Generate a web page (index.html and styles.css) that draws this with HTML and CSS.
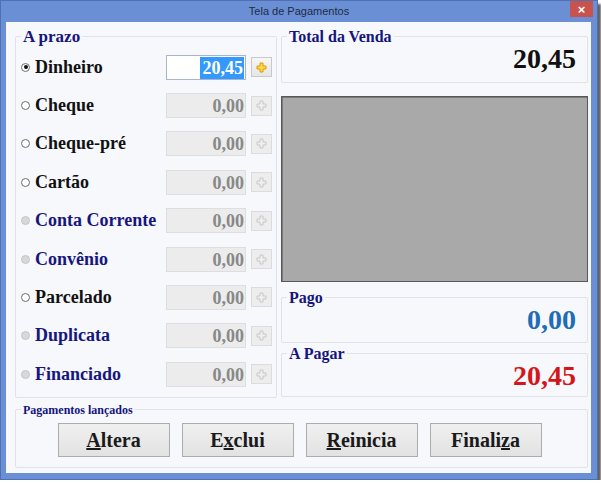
FILE: index.html
```html
<!DOCTYPE html>
<html lang="pt-BR">
<head>
  <meta charset="UTF-8" />
  <meta name="viewport" content="width=device-width, initial-scale=1" />
  <title>Tela de Pagamentos</title>
  <link rel="stylesheet" href="styles.css">
</head>
<body>

  <div class="window">
    <div class="titlebar">
      <span class="title">Tela de Pagamentos</span>
      <button class="close">&times;</button>
    </div>

    <div class="client">
      <div class="top">

        <!-- Forms of payment -->
        <div class="group prazo">
          <div class="legend">A prazo</div>
          <div class="rows">
            <div class="row">
              <span class="radio checked"></span>
              <span class="label">Dinheiro</span>
              <div class="amount active"><span class="sel">20,45</span></div>
              <button class="add active"><svg viewBox="0 0 11 11"><polygon points="4,1 7,1 7,4 10,4 10,7 7,7 7,10 4,10 4,7 1,7 1,4 4,4" /></svg></button>
            </div>
            <div class="row">
              <span class="radio"></span>
              <span class="label">Cheque</span>
              <div class="amount">0,00</div>
              <button class="add"><svg viewBox="0 0 11 11"><polygon points="4,1 7,1 7,4 10,4 10,7 7,7 7,10 4,10 4,7 1,7 1,4 4,4" /></svg></button>
            </div>
            <div class="row">
              <span class="radio"></span>
              <span class="label">Cheque-pré</span>
              <div class="amount">0,00</div>
              <button class="add"><svg viewBox="0 0 11 11"><polygon points="4,1 7,1 7,4 10,4 10,7 7,7 7,10 4,10 4,7 1,7 1,4 4,4" /></svg></button>
            </div>
            <div class="row">
              <span class="radio"></span>
              <span class="label">Cartão</span>
              <div class="amount">0,00</div>
              <button class="add"><svg viewBox="0 0 11 11"><polygon points="4,1 7,1 7,4 10,4 10,7 7,7 7,10 4,10 4,7 1,7 1,4 4,4" /></svg></button>
            </div>
            <div class="row off">
              <span class="radio"></span>
              <span class="label">Conta Corrente</span>
              <div class="amount">0,00</div>
              <button class="add"><svg viewBox="0 0 11 11"><polygon points="4,1 7,1 7,4 10,4 10,7 7,7 7,10 4,10 4,7 1,7 1,4 4,4" /></svg></button>
            </div>
            <div class="row off">
              <span class="radio"></span>
              <span class="label">Convênio</span>
              <div class="amount">0,00</div>
              <button class="add"><svg viewBox="0 0 11 11"><polygon points="4,1 7,1 7,4 10,4 10,7 7,7 7,10 4,10 4,7 1,7 1,4 4,4" /></svg></button>
            </div>
            <div class="row">
              <span class="radio"></span>
              <span class="label">Parcelado</span>
              <div class="amount">0,00</div>
              <button class="add"><svg viewBox="0 0 11 11"><polygon points="4,1 7,1 7,4 10,4 10,7 7,7 7,10 4,10 4,7 1,7 1,4 4,4" /></svg></button>
            </div>
            <div class="row off">
              <span class="radio"></span>
              <span class="label">Duplicata</span>
              <div class="amount">0,00</div>
              <button class="add"><svg viewBox="0 0 11 11"><polygon points="4,1 7,1 7,4 10,4 10,7 7,7 7,10 4,10 4,7 1,7 1,4 4,4" /></svg></button>
            </div>
            <div class="row off">
              <span class="radio"></span>
              <span class="label">Financiado</span>
              <div class="amount">0,00</div>
              <button class="add"><svg viewBox="0 0 11 11"><polygon points="4,1 7,1 7,4 10,4 10,7 7,7 7,10 4,10 4,7 1,7 1,4 4,4" /></svg></button>
            </div>
          </div>
        </div>

        <!-- Totals -->
        <div class="right">
          <div class="group total">
            <div class="legend small">Total da Venda</div>
            <div class="value">20,45</div>
          </div>
          <div class="panel"></div>
          <div class="group pago">
            <div class="legend small">Pago</div>
            <div class="value blue">0,00</div>
          </div>
          <div class="group apagar">
            <div class="legend small">A Pagar</div>
            <div class="value red">20,45</div>
          </div>
        </div>
      </div>

      <div class="group lancados">
        <div class="legend tiny">Pagamentos lançados</div>
        <div class="buttons">
          <button class="btn"><u>A</u>ltera</button>
          <button class="btn">E<u>x</u>clui</button>
          <button class="btn"><u>R</u>einicia</button>
          <button class="btn">Finali<u>z</u>a</button>
        </div>
      </div>
    </div>
  </div>

</body>
</html>
```

FILE: styles.css
```css
/* Reset & basics */
* {
  box-sizing: border-box;
}
body {
  margin: 0;
  background: #fff;
  font-family: 'Liberation Serif', 'Times New Roman', serif;
}

/* Window frame */
.window {
  width: 598px;
  height: 480px;
  background: #6b8fd4;
  border: 1px solid #4f70b4;
  box-shadow: 3px 4px 2px rgba(30, 30, 30, 0.7);
  display: flex;
  flex-direction: column;
}
.titlebar {
  height: 21px;
  display: grid;
  grid-template-columns: 1fr auto 1fr;
  align-items: start;
}
.title {
  grid-column: 2;
  font-family: 'Liberation Sans', Arial, sans-serif;
  font-size: 11px;
  line-height: 21px;
  color: #1d2b45;
}
.close {
  grid-column: 3;
  justify-self: end;
  width: 23px;
  height: 16px;
  margin-right: 4px;
  padding: 0;
  border: none;
  background: #c8524c;
  color: #fff;
  font-family: 'Liberation Sans', Arial, sans-serif;
  font-size: 13px;
  font-weight: bold;
  line-height: 15px;
}
.client {
  width: 585px;
  height: 451px;
  margin-left: 5px;
  background: #f7f8fc;
  padding: 14px 3px 0 9px;
}

/* Group boxes */
.group {
  border: 1px solid #dfe2ea;
  border-radius: 2px;
}
.legend {
  width: max-content;
  margin: -9px 0 0 5px;
  padding: 0 2px;
  background: #f7f8fc;
  color: #15157c;
  font-weight: bold;
  font-size: 17px;
  line-height: 18px;
}
.legend.small {
  font-size: 16px;
}
.legend.tiny {
  font-size: 12px;
  line-height: 14px;
  margin-top: -7px;
}

.top {
  display: flex;
  gap: 4px;
}

/* A prazo */
.prazo {
  width: 262px;
  height: 362px;
}
.rows {
  display: grid;
  grid-auto-rows: 38.375px;
  padding: 2px 4px 0 5px;
}
.row {
  display: grid;
  grid-template-columns: 9px 1fr 80px 21px;
  column-gap: 5px;
  align-items: center;
}
.radio {
  width: 9px;
  height: 9px;
  border-radius: 50%;
  border: 1px solid #6e6e6e;
  background: #fff;
  display: flex;
  align-items: center;
  justify-content: center;
}
.radio.checked::after {
  content: '';
  width: 4px;
  height: 4px;
  border-radius: 50%;
  background: #111;
}
.row.off .radio {
  border-color: #c6c6c6;
  background: #d8d8d8;
}
.label {
  font-weight: bold;
  font-size: 18px;
  color: #111;
  white-space: nowrap;
}
.row.off .label {
  color: #16167e;
}
.amount {
  height: 25px;
  border: 1px solid #dedede;
  background: #ececec;
  color: #888;
  text-align: right;
  padding-right: 1px;
  font-weight: bold;
  font-size: 18px;
  line-height: 24px;
}
.amount.active {
  background: #fff;
  border-color: #a9b5c8;
}
.sel {
  background: #3399ff;
  color: #fff;
  padding: 1px 1px 1px 3px;
}
.add {
  width: 21px;
  height: 20px;
  padding: 0;
  border: 1px solid #dcdcdc;
  background: #ededed;
  display: flex;
  align-items: center;
  justify-content: center;
}
.add svg {
  width: 11px;
  height: 11px;
}
.add polygon {
  fill: #eeeeee;
  stroke: #c8c8c8;
  stroke-width: 1;
}
.add.active {
  background: linear-gradient(#f6f6f6, #e6e6e6);
  border-color: #c9c9c9;
}
.add.active polygon {
  fill: #ffd84d;
  stroke: #dc9c00;
}

/* Totals */
.right {
  width: 307px;
  display: flex;
  flex-direction: column;
}
.total {
  height: 47px;
}
.panel {
  height: 186px;
  margin: 13px 0 15px;
  background: #a9a9a9;
  border: 1px solid #585858;
  box-shadow: inset 1px 1px 0 #7a7a7a;
}
.pago {
  height: 46px;
  margin-bottom: 10px;
}
.apagar {
  height: 44px;
}
.value {
  margin-top: -1px;
  padding-right: 11px;
  text-align: right;
  font-weight: bold;
  font-size: 28px;
  line-height: 28px;
  color: #111;
}
.value.blue {
  color: #1f6db6;
}
.value.red {
  color: #d4161b;
}

/* Pagamentos lançados */
.lancados {
  height: 59px;
  margin-top: 11px;
}
.buttons {
  display: flex;
  justify-content: center;
  gap: 12px;
  margin-top: 6px;
  padding-right: 4px;
}
.btn {
  width: 112px;
  height: 34px;
  border: 1px solid #acacac;
  background: linear-gradient(#f0f0f0, #e2e2e2);
  font-family: 'Liberation Serif', 'Times New Roman', serif;
  font-weight: bold;
  font-size: 20px;
  color: #1a1a1a;
  padding: 0;
}
```
